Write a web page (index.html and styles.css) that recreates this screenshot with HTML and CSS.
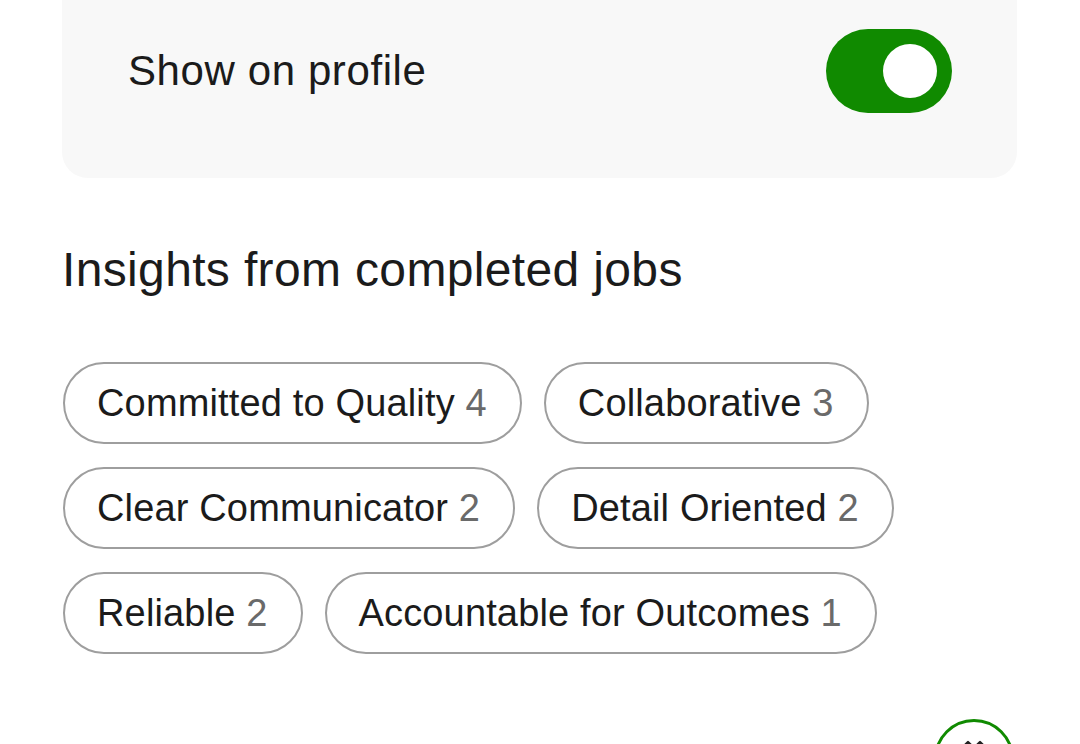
FILE: index.html
```html
<!DOCTYPE html>
<html lang="en">
<head>
<meta charset="utf-8">
<title>Insights</title>
<link rel="stylesheet" href="styles.css">
</head>
<body>
<main class="page">
  <section class="card">
    <div class="setting-row">
      <span class="setting-label">Show on profile</span>
      <span class="toggle" role="switch" aria-checked="true"><span class="knob"></span></span>
    </div>
  </section>

  <h2 class="heading">Insights from completed jobs</h2>

  <ul class="chips">
    <li class="chip">Committed to Quality <span class="count">4</span></li>
    <li class="chip">Collaborative <span class="count">3</span></li>
    <li class="chip">Clear Communicator <span class="count">2</span></li>
    <li class="chip">Detail Oriented <span class="count">2</span></li>
    <li class="chip">Reliable <span class="count">2</span></li>
    <li class="chip">Accountable for Outcomes <span class="count">1</span></li>
  </ul>
</main>

<button class="fab" aria-label="Scroll up">
  <svg width="40" height="24" viewBox="0 0 40 24" fill="none" stroke="#222" stroke-width="2.4" stroke-linecap="round" stroke-linejoin="round">
    <path d="M8 26 L14 20 L20 26"/>
    <path d="M20 26 L26 20 L32 26"/>
  </svg>
</button>
</body>
</html>
```

FILE: styles.css
```css
html, body {
  margin: 0;
  padding: 0;
  background: #ffffff;
}

body {
  font-family: "Liberation Sans", Arial, Helvetica, sans-serif;
  color: #1b1b1b;
  width: 1080px;
  height: 744px;
  overflow: hidden;
  position: relative;
}

.page {
  padding: 0 63px 0 62px;
}

.card {
  background: #f8f8f8;
  border-radius: 0 0 26px 26px;
  padding: 29px 65px 65px 66px;
}

.setting-row {
  display: flex;
  align-items: center;
  justify-content: space-between;
  height: 84px;
}

.setting-label {
  font-size: 42px;
  line-height: 50px;
  letter-spacing: 0.6px;
  color: #1b1b1b;
}

.toggle {
  display: flex;
  align-items: center;
  justify-content: flex-end;
  width: 126px;
  height: 84px;
  box-sizing: border-box;
  padding-right: 15px;
  border-radius: 42px;
  background: #108a00;
}

.knob {
  width: 54px;
  height: 54px;
  border-radius: 50%;
  background: #ffffff;
}

.heading {
  margin: 64px 0 0 0;
  font-size: 48px;
  line-height: 56px;
  font-weight: 400;
  letter-spacing: 0.35px;
  color: #1b1b1b;
}

.chips {
  list-style: none;
  margin: 64px 0 0 1px;
  padding: 0;
  display: flex;
  flex-wrap: wrap;
  column-gap: 22px;
  row-gap: 23px;
  max-width: 860px;
}

.chip {
  box-sizing: border-box;
  height: 82px;
  padding: 0 33px 0 32px;
  border: 2px solid #9e9e9e;
  border-radius: 41px;
  display: flex;
  align-items: center;
  font-size: 38px;
  line-height: 1;
  letter-spacing: 0.15px;
  color: #1b1b1b;
  white-space: pre;
}

.count {
  color: #6a6a6a;
}

.fab {
  position: absolute;
  left: 934px;
  top: 719px;
  width: 80px;
  height: 80px;
  box-sizing: border-box;
  border: 3px solid #108a00;
  border-radius: 50%;
  background: #ffffff;
  padding: 0;
  display: flex;
  justify-content: center;
  align-items: flex-start;
}

.fab svg {
  display: block;
}
```
